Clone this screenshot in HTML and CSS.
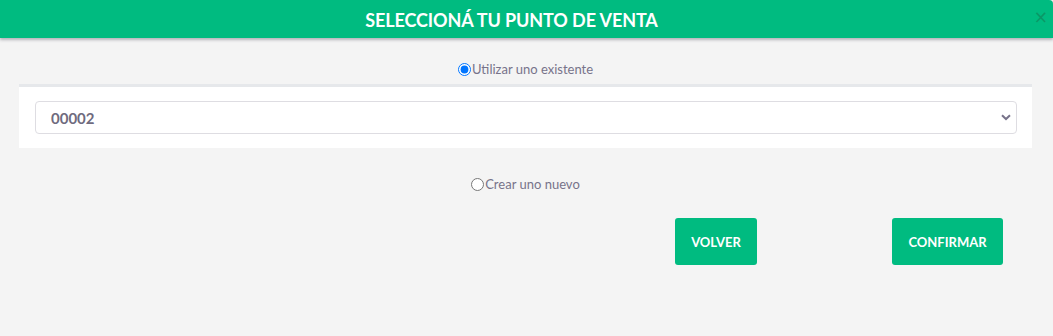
FILE: index.html
```html
<!DOCTYPE html>
<html lang="es">
<head>
<meta charset="utf-8">
<title>Punto de venta</title>
<link rel="stylesheet" href="styles.css">
</head>
<body>
<div class="modal">
  <header class="modal-header">
    <h1 class="modal-title">SELECCIONÁ TU PUNTO DE VENTA</h1>
    <span class="close">×</span>
  </header>
  <div class="modal-body">
    <label class="option option-top">
      <input type="radio" name="pv" checked>
      <span>Utilizar uno existente</span>
    </label>
    <div class="panel">
      <div class="select">
        <span class="select-value">00002</span>
        <svg class="chev" width="10" height="7" viewBox="0 0 10 7"><path d="M1 1.2 L5 5 L9 1.2" fill="none" stroke="#77738a" stroke-width="2"/></svg>
      </div>
    </div>
    <label class="option option-new">
      <input type="radio" name="pv">
      <span>Crear uno nuevo</span>
    </label>
    <div class="actions">
      <button class="btn btn-back">VOLVER</button>
      <button class="btn btn-confirm">CONFIRMAR</button>
    </div>
  </div>
</div>
</body>
</html>
```
FILE: styles.css
```css
* { box-sizing: border-box; }
html, body {
  margin: 0;
  padding: 0;
  background: #f4f4f4;
  font-family: Lato, "Liberation Sans", sans-serif;
}
.modal {
  width: 1053px;
  height: 336px;
  background: #f4f4f4;
}
.modal-header {
  height: 38px;
  background: #00bb80;
  box-shadow: 0 2px 3px rgba(60, 60, 80, 0.35);
  display: flex;
  align-items: center;
  justify-content: center;
  position: relative;
  border-top-right-radius: 4px;
}
.modal-title {
  margin: 0;
  color: #fff;
  font-size: 18px;
  font-weight: 700;
  letter-spacing: -0.1px;
  padding-top: 1px;
  padding-right: 30px;
}
.close {
  position: absolute;
  right: 5px;
  top: 9px;
  color: #0b9766;
  font-size: 17px;
  font-family: "DejaVu Sans", sans-serif;
  line-height: 1;
}
.modal-body {
  display: flex;
  flex-direction: column;
  padding: 0 21px 0 19px;
}
.option {
  display: flex;
  align-items: center;
  justify-content: center;
  color: #77738a;
  font-size: 13px;
}
.option input {
  margin: 0 1px 0 0;
  width: 13px;
  height: 13px;
}
.option-top {
  margin-top: 23px;
  height: 16px;
}
.panel {
  margin-top: 7px;
  border-top: 3px solid #e6e8eb;
  background: #fff;
  padding: 14px 15px 14px 16px;
}
.select {
  height: 33px;
  border: 1px solid #dedde2;
  border-radius: 4px;
  background: #fff;
  display: flex;
  align-items: center;
  justify-content: space-between;
  padding: 0 5px 0 15px;
}
.select-value {
  color: #6f6b7e;
  font-size: 15px;
  font-weight: 700;
}
.option-new {
  margin-top: 28px;
  height: 16px;
}
.actions {
  display: flex;
  justify-content: flex-end;
  gap: 135px;
  margin-top: 26px;
  padding-right: 29px;
}
.btn {
  height: 47px;
  border: none;
  border-radius: 3px;
  background: #00bb80;
  color: #fff;
  font-family: Lato, "Liberation Sans", sans-serif;
  font-weight: 700;
  font-size: 13px;
  padding: 0;
  cursor: pointer;
}
.btn-back { width: 82px; }
.btn-confirm { width: 111px; }
```
